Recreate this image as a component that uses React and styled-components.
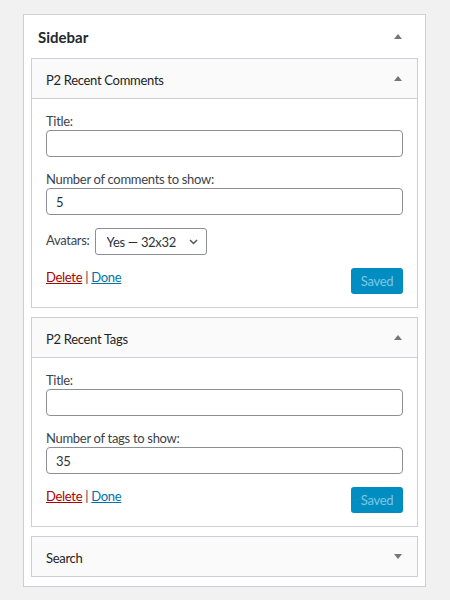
import React, { useState } from "react";
import styled, { createGlobalStyle } from "styled-components";

const GlobalStyle = createGlobalStyle`
  body {
    margin: 0;
    background: #f1f1f1;
    font-family: Lato, "Liberation Sans", sans-serif;
    font-size: 13px;
    letter-spacing: -0.3px;
    color: #3c434a;
  }
`;

function Arrow({ down }) {
  return (
    <ArrowIcon width="8" height="5" viewBox="0 0 8 5">
      <polygon points={down ? "0,0 8,0 4,5" : "0,5 8,5 4,0"} />
    </ArrowIcon>
  );
}

function Field({ label, value }) {
  return (
    <FieldRow>
      <Label>{label}</Label>
      <TextInput type="text" defaultValue={value} />
    </FieldRow>
  );
}

function Actions() {
  return (
    <ActionRow>
      <Links>
        <LinkText $danger>Delete</LinkText> | <LinkText>Done</LinkText>
      </Links>
      <SaveButton disabled>Saved</SaveButton>
    </ActionRow>
  );
}

export default function App() {
  const [avatar, setAvatar] = useState("32");

  return (
    <Page>
      <GlobalStyle />
      <Sidebar>
        <SidebarHeader>
          <SidebarTitle>Sidebar</SidebarTitle>
          <Arrow />
        </SidebarHeader>
        <WidgetList>
          <Widget>
            <WidgetHeader $open>
              <WidgetTitle>P2 Recent Comments</WidgetTitle>
              <Arrow />
            </WidgetHeader>
            <WidgetBody>
              <Field label="Title:" value="" />
              <Field label="Number of comments to show:" value="5" />
              <InlineRow>
                <InlineLabel>Avatars:</InlineLabel>
                <SelectWrap>
                  <Select
                    value={avatar}
                    onChange={(e) => setAvatar(e.target.value)}
                  >
                    <option value="0">No avatars</option>
                    <option value="16">Yes — 16x16</option>
                    <option value="32">Yes — 32x32</option>
                    <option value="48">Yes — 48x48</option>
                  </Select>
                  <Chevron width="9" height="6" viewBox="0 0 9 6">
                    <polyline points="1,1 4.5,4.5 8,1" />
                  </Chevron>
                </SelectWrap>
              </InlineRow>
              <Actions />
            </WidgetBody>
          </Widget>

          <Widget>
            <WidgetHeader $open>
              <WidgetTitle>P2 Recent Tags</WidgetTitle>
              <Arrow />
            </WidgetHeader>
            <WidgetBody>
              <Field label="Title:" value="" />
              <Field label="Number of tags to show:" value="35" />
              <Actions />
            </WidgetBody>
          </Widget>

          <Widget>
            <WidgetHeader>
              <WidgetTitle>Search</WidgetTitle>
              <Arrow down />
            </WidgetHeader>
          </Widget>
        </WidgetList>
      </Sidebar>
    </Page>
  );
}

const Page = styled.div`
  padding: 14px 24px 13px 23px;
`;

const Sidebar = styled.div`
  width: 403px;
  box-sizing: border-box;
  background: #fff;
  border: 1px solid #ccd0d4;
`;

const SidebarHeader = styled.div`
  height: 43px;
  display: flex;
  align-items: center;
  justify-content: space-between;
  padding: 0 23px 0 14px;
`;

const SidebarTitle = styled.h2`
  margin: 0;
  font-size: 15px;
  font-weight: 700;
  letter-spacing: 0;
  color: #23282d;
`;

const ArrowIcon = styled.svg`
  display: block;
  fill: #72777c;
`;

const WidgetList = styled.div`
  display: flex;
  flex-direction: column;
  gap: 9px;
  padding: 0 7px 9px;
`;

const Widget = styled.div`
  border: 1px solid #ccd0d4;
  background: #fff;
`;

const WidgetHeader = styled.div`
  height: 39px;
  display: flex;
  align-items: center;
  justify-content: space-between;
  padding: 0 15px 0 14px;
  background: #fafafa;
  border-bottom: ${(p) => (p.$open ? "1px solid #ccd0d4" : "none")};
`;

const WidgetTitle = styled.h3`
  margin: 0;
  font-size: 13px;
  font-weight: 400;
  color: #1d2327;
  padding-top: 2px;
`;

const WidgetBody = styled.div`
  padding: 0 14px 13px;
`;

const FieldRow = styled.div`
  margin-top: 13px;
`;

const Label = styled.label`
  display: block;
  line-height: 18px;
`;

const TextInput = styled.input`
  display: block;
  width: 100%;
  height: 27px;
  box-sizing: border-box;
  margin: 0;
  padding: 0 9px;
  border: 1px solid #8c8f94;
  border-radius: 4px;
  background: #fff;
  font-family: inherit;
  font-size: 13px;
  letter-spacing: inherit;
  color: #2c3338;
  outline: none;
`;

const InlineRow = styled.div`
  margin-top: 13px;
  display: flex;
  align-items: center;
  gap: 5px;
`;

const InlineLabel = styled.label`
  line-height: 18px;
  padding-bottom: 4px;
`;

const SelectWrap = styled.div`
  position: relative;
`;

const Select = styled.select`
  display: block;
  width: 112px;
  height: 27px;
  box-sizing: border-box;
  margin: 0;
  padding: 0 24px 0 11px;
  border: 1px solid #8c8f94;
  border-radius: 3px;
  background: #fff;
  appearance: none;
  font-family: inherit;
  font-size: 13px;
  letter-spacing: inherit;
  color: #2c3338;
  outline: none;
`;

const Chevron = styled.svg`
  position: absolute;
  right: 9px;
  top: 11px;
  fill: none;
  stroke: #50575e;
  stroke-width: 1.5;
  pointer-events: none;
`;

const ActionRow = styled.div`
  margin-top: 13px;
  display: flex;
  justify-content: space-between;
  align-items: flex-start;
`;

const Links = styled.div`
  line-height: 18px;
  color: #3c434a;
`;

const LinkText = styled.a`
  color: ${(p) => (p.$danger ? "#a00" : "#0073aa")};
  text-decoration: underline;
  cursor: pointer;
`;

const SaveButton = styled.button`
  width: 52px;
  height: 26px;
  margin: 0;
  padding: 0;
  border: none;
  border-radius: 3px;
  background: #008ec2;
  color: #80c6e0;
  font-family: inherit;
  font-size: 13px;
  letter-spacing: inherit;
`;
